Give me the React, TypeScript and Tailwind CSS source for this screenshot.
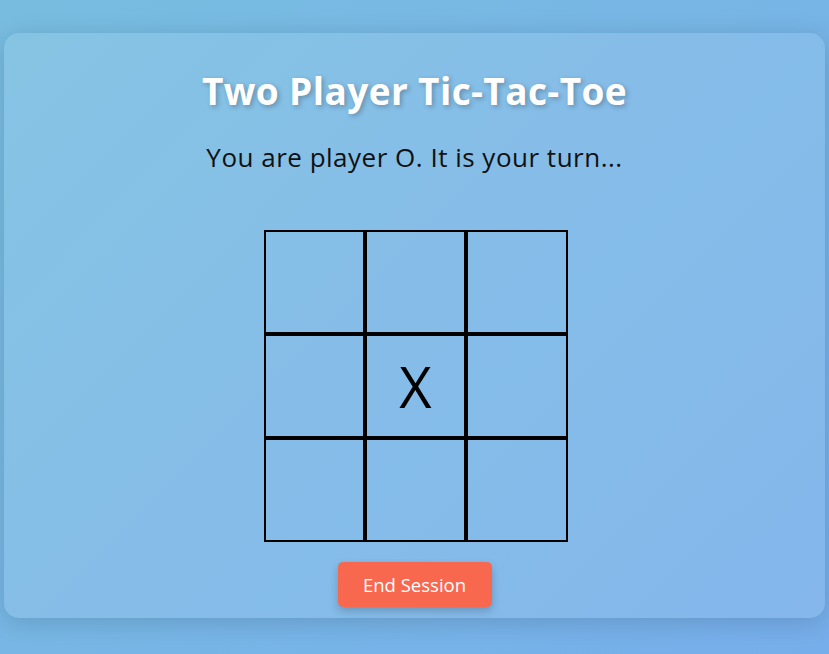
import React from "react";

const cells = ["", "", "", "", "X", "", "", "", ""];

export default function App() {
  return (
    <div
      className="min-h-screen w-full flex flex-col items-center pt-[33px] px-[4px] bg-[linear-gradient(135deg,#78bde0_0%,#76aeeb_100%)]"
      style={{ fontFamily: "'Open Sans', 'Liberation Sans', sans-serif" }}
    >
      <div className="w-full h-[585px] rounded-[15px] bg-white/10 shadow-[0_4px_24px_rgba(0,0,0,0.15)] flex flex-col items-center pt-[36px]">
        <h1 className="text-[37px] leading-[44px] font-bold tracking-[0.4px] text-white [text-shadow:2px_2px_5px_rgba(0,0,0,0.25)]">
          Two Player Tic-Tac-Toe
        </h1>
        <p className="mt-[26px] text-[26px] leading-[36px] tracking-[0.5px] text-[#111]">
          You are player O. It is your turn...
        </p>
        <div className="mt-[55px] ml-[2px] w-[304px] grid grid-cols-3">
          {cells.map((c, i) => (
            <div
              key={i}
              className="h-[104px] border-2 border-black flex items-center justify-center text-[56px] text-black"
            >
              {c}
            </div>
          ))}
        </div>
        <button className="mt-[20px] w-[154px] h-[45px] rounded-[5px] bg-[#f7684f] text-white text-[18.5px] shadow-[0_4px_8px_rgba(0,0,0,0.2)]">
          End Session
        </button>
      </div>
    </div>
  );
}
